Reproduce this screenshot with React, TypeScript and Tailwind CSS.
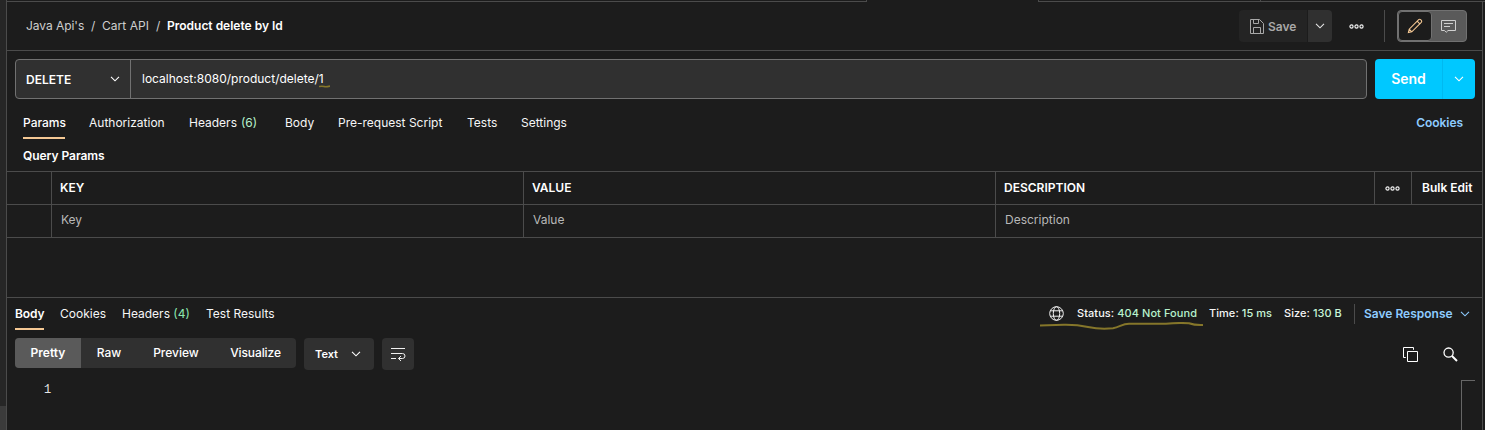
import React from "react";

function Chevron({ className = "" }: { className?: string }) {
  return (
    <svg width="10" height="6" viewBox="0 0 10 6" fill="none" stroke="currentColor" strokeWidth="1.1" className={className}>
      <path d="M1 0.8 L5 4.8 L9 0.8" />
    </svg>
  );
}

function Dots() {
  return (
    <svg width="15" height="5" viewBox="0 0 15 5" fill="none" stroke="#f4f4f4" strokeWidth="1.15">
      <circle cx="2.5" cy="2.5" r="1.6" />
      <circle cx="7.5" cy="2.5" r="1.6" />
      <circle cx="12.5" cy="2.5" r="1.6" />
    </svg>
  );
}

const tabs = [
  { label: "Authorization", width: "w-[76px]" },
  { label: "Headers", count: "(6)", width: "w-[72px]" },
  { label: "Body", width: "w-[29px]" },
  { label: "Pre-request Script", width: "w-[105px]" },
  { label: "Tests", width: "w-[30px]" },
  { label: "Settings", width: "w-[47px]" },
];

function Header() {
  return (
    <header className="flex h-[49px] shrink-0 items-center border-b border-[#4b4b4b] pl-[19px] pr-[15px]">
      <nav className="flex grow items-center whitespace-nowrap text-[#cecece]">
        <span className="w-[65px] tracking-[-0.05px]">Java Api's</span>
        <span className="w-[11px]">/</span>
        <span className="w-[54px] tracking-[0.05px]">Cart API</span>
        <span className="w-[11px]">/</span>
        <span className="font-semibold text-white">Product delete by Id</span>
      </nav>
      <div className="flex h-8 items-center">
        <button className="flex h-8 w-[68px] items-center rounded-l bg-[#242424] pl-[11px] font-semibold text-[#a8a8a8]">
          <svg width="14" height="15" viewBox="0 0 14 15" fill="none" stroke="currentColor" className="mr-1 shrink-0">
            <path d="M.5 .5H9.5L13.5 4.5V14.5H.5ZM3.5 .5V4.5H8.5V.5M3.5 14.5V8.5H10.5V14.5" />
          </svg>
          <span className="pt-px text-xs">Save</span>
        </button>
        <button className="ml-px flex h-8 w-6 items-center justify-center rounded-r bg-[#303030] text-[#e6e6e6]">
          <Chevron />
        </button>
        <span className="ml-[17px]"><Dots /></span>
        <span className="ml-5 h-8 w-px bg-[#4b4b4b]" />
        <div className="ml-3 flex h-8 w-[70px] rounded border border-[#717171] bg-[#5a5a5a]">
          <div className="flex h-[30px] w-[34px] items-center justify-center rounded border border-[#717171] bg-[#1c1c1c]">
            <svg width="16" height="16" viewBox="0 0 16 16" fill="none" stroke="#f5c894" strokeWidth="1.1">
              <path d="M1.4 14.6 L2.2 11.2 L11.7 1.7 Q12.6 .8 13.6 1.7 L14.3 2.4 Q15.2 3.4 14.3 4.3 L4.8 13.8 Z M10.2 3.2 L12.8 5.8 M2.2 11.2 L4.8 13.8" />
            </svg>
          </div>
          <div className="flex grow items-center justify-center pr-px text-[#d0d0d0]">
            <svg width="15" height="15" viewBox="0 0 15 15" fill="none" stroke="currentColor">
              <path d="M.5 1.5H14.5V11.5H7L5.2 13.3L3.5 11.5H.5ZM3 4.5H12M3 7.5H9" />
            </svg>
          </div>
        </div>
      </div>
    </header>
  );
}

function RequestBar() {
  return (
    <section className="flex h-12 shrink-0 pl-2 pr-[7px] pt-2">
      <div className="flex h-10 w-[1352px] rounded border border-[#717171] bg-[#303030]">
        <div className="flex w-[115px] items-center justify-between border-r border-[#717171] pl-[10px] pr-[10px] font-semibold text-white">
          <span className="pt-px">DELETE</span>
          <Chevron />
        </div>
        <div className="flex items-center pl-[11px] text-white">
          <span>
            localhost:8080/product/delete/
            <span className="relative">1
              <svg className="absolute left-0 top-[14px]" width="11" height="3" viewBox="0 0 11 3" fill="none">
                <path d="M0 1.5 Q3 1 5 1.5 T11 1.1" stroke="#85762a" strokeWidth="1.6" />
              </svg>
            </span>
          </span>
        </div>
      </div>
      <button className="ml-2 flex h-10 w-[100px] rounded bg-[#00c8ff] text-white">
        <span className="flex h-full w-[67px] items-center justify-center text-sm font-semibold">Send</span>
        <span className="flex h-full grow items-center justify-center border-l border-[#00b9f0]"><Chevron /></span>
      </button>
    </section>
  );
}

function RequestTabs() {
  return (
    <section className="flex h-10 shrink-0 gap-6 whitespace-nowrap pl-4 pr-[19px] leading-[48px] text-[#f6f6f6]">
      <span className="h-10 w-[42px] border-b-2 border-[#f5c894] font-medium text-white">Params</span>
      {tabs.map((t) => (
        <span key={t.label} className={t.width}>
          {t.label}
          {t.count && <span className="ml-1 text-[#b7f2cc]">{t.count}</span>}
        </span>
      ))}
      <span className="ml-auto font-semibold tracking-[-0.05px] text-[#8ecbff]">Cookies</span>
    </section>
  );
}

function ParamsTable() {
  const cell = "flex items-center border-l border-[#4b4b4b] pl-2";
  return (
    <section className="shrink-0">
      <h2 className="h-8 pl-4 leading-[34px] font-semibold tracking-[-0.05px] text-white">Query Params</h2>
      <div className="flex h-[34px] border-y border-[#4b4b4b] font-semibold text-white">
        <div className="w-11" />
        <div className={`${cell} w-[472px]`}>KEY</div>
        <div className={`${cell} w-[472px]`}>VALUE</div>
        <div className={`${cell} w-[379px]`}>DESCRIPTION</div>
        <div className="flex w-[37px] items-center border-l border-[#4b4b4b] pl-[10px]"><Dots /></div>
        <div className="flex grow items-center whitespace-nowrap border-l border-[#4b4b4b] pl-[10px]">Bulk Edit</div>
      </div>
      <div className="flex h-[33px] border-b border-[#4b4b4b] text-[#b8b8b8]">
        <div className="w-11" />
        <div className={`${cell} w-[472px] pb-0.5`}><span className="pl-px">Key</span></div>
        <div className={`${cell} w-[472px] pb-0.5`}><span className="pl-px">Value</span></div>
        <div className={`${cell} grow pb-0.5`}><span className="pl-px">Description</span></div>
      </div>
    </section>
  );
}

function ResponseTabs() {
  return (
    <section className="mt-[59px] flex h-[33px] shrink-0 whitespace-nowrap border-t border-[#4b4b4b] pl-2 leading-[31px] text-[#f6f6f6]">
      <span className="h-8 w-[29px] border-b-2 border-[#f5c894] font-semibold tracking-[-0.1px] text-white">Body</span>
      <span className="ml-4 w-[46px]">Cookies</span>
      <span className="ml-4 w-[68px]">Headers <span className="text-[#8ce8b0]">(4)</span></span>
      <span className="ml-4">Test Results</span>
      <div className="ml-auto flex h-[31px] items-center pr-[12px]">
        <div className="relative flex items-center">
          <svg width="15" height="15" viewBox="0 0 15 15" fill="none" stroke="#f1f1f1" className="mr-[13px]">
            <circle cx="7.5" cy="7.5" r="6.8" />
            <ellipse cx="7.5" cy="7.5" rx="3.2" ry="6.8" />
            <path d="M1.4 4.8H13.6M1.4 10.2H13.6" />
          </svg>
          <span className="w-[119px] text-[11px] font-medium tracking-[0.07px]">Status: <span className="text-[#b7f2cc]">404 Not Found</span></span>
          <svg className="absolute left-[-9px] top-[24px]" width="164" height="9" viewBox="0 0 164 9" fill="none">
            <path d="M0 3.5 L24 2.8 Q37 2.6 48 5 Q60 7.5 73 6.2 C80 5 82 2 89 1.8 L126 1.7 Q137 .6 149 1.2 Q155 3.4 163 3" stroke="#85762a" strokeWidth="2" />
          </svg>
        </div>
        <span className="ml-[13px] w-[62px] text-[11px] font-medium tracking-[0.05px]">Time: <span className="text-[#c8f5d8]">15 ms</span></span>
        <span className="ml-[13px] w-[58px] text-[11px] font-medium tracking-[0.05px]">Size: <span className="text-[#c8f5d8]">130 B</span></span>
        <span className="ml-[12px] h-5 w-px bg-[#4b4b4b]" />
        <span className="ml-[9px] w-[89px] font-semibold text-[#8ecbff]">Save Response</span>
        <Chevron className="ml-[7px] text-[#8ecbff]" />
      </div>
    </section>
  );
}

function ResponseToolbar() {
  return (
    <section className="mt-2 flex h-8 shrink-0 items-start pl-2 pr-6 text-white">
      <div className="flex h-[30px] w-[281px] overflow-hidden rounded bg-[#303030] font-medium">
        <span className="flex w-[66px] items-center justify-center bg-[#5a5a5a] font-semibold">Pretty</span>
        <span className="flex w-14 items-center justify-center">Raw</span>
        <span className="flex w-[78px] items-center justify-center">Preview</span>
        <span className="flex w-[81px] items-center justify-center tracking-[-0.1px]">Visualize</span>
      </div>
      <div className="ml-2 flex h-8 w-[70px] items-center justify-between rounded bg-[#303030] pl-[11px] pr-[13px] text-[11px] font-semibold">
        Text <Chevron />
      </div>
      <div className="ml-2 flex h-8 w-8 items-center justify-center rounded bg-[#303030]">
        <svg width="16" height="14" viewBox="0 0 16 14" fill="none" stroke="#f1f1f1">
          <path d="M1 1.5H15M1 6.5H12.5Q15 6.5 15 9T12.5 11.5H8.5M1 11.5H6M11 9L8.5 11.5L11 14" />
        </svg>
      </div>
      <div className="ml-auto flex h-8 items-center gap-[25px]">
        <svg width="15" height="15" viewBox="0 0 15 15" fill="none" stroke="white">
          <path d="M4.5 4.5H14.5V14.5H4.5ZM2.8 10.5H.5V.5H10.5V2.8" />
        </svg>
        <svg width="15" height="15" viewBox="0 0 15 15" fill="none" stroke="white">
          <circle cx="5.6" cy="5.6" r="4.6" strokeWidth="1.3" />
          <path d="M9 9L14 14" strokeWidth="2" />
        </svg>
      </div>
    </section>
  );
}

export default function App() {
  return (
    <div className="flex h-[430px] w-[1485px] overflow-hidden bg-[#1c1c1c] font-['Inter',sans-serif] text-xs">
      <aside className="flex w-[7px] shrink-0 flex-col border-r border-[#4b4b4b] bg-[#262626]">
        <div className="mt-auto h-6 bg-[#3b3b3b]" />
      </aside>
      <main className="flex w-[1475px] shrink-0 flex-col">
        <div className="flex h-0.5 shrink-0">
          <div className="w-[860px] border-b border-r border-[#4b4b4b]" />
          <div className="w-[171px]" />
          <div className="w-[223px] border-b border-x border-[#4b4b4b]" />
          <div className="grow border-b border-[#4b4b4b]" />
        </div>
        <Header />
        <RequestBar />
        <RequestTabs />
        <ParamsTable />
        <ResponseTabs />
        <ResponseToolbar />
        <div className="flex grow justify-between">
          <span className="pl-[37px] pt-[11px] font-['Liberation_Mono',monospace] leading-[18px] text-[#e6e6e6]">1</span>
          <div className="mr-[7px] mt-[10px] w-3.5 border-l border-t border-[#666666]" />
        </div>
      </main>
      <div className="mt-px grow border-l border-t border-[#4b4b4b]" />
    </div>
  );
}
